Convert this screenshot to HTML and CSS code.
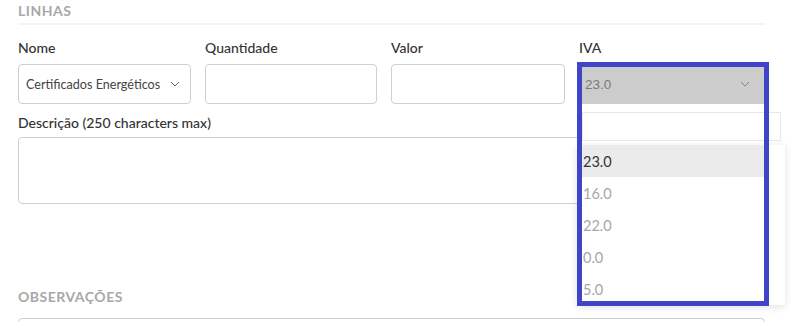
FILE: index.html
```html
<!DOCTYPE html>
<html lang="pt">
<head>
<meta charset="utf-8">
<title>Linhas</title>
<link rel="stylesheet" href="styles.css">
</head>
<body>
<div class="page">
  <h3 class="section-title">Linhas</h3>
  <div class="fields">
    <div class="field">
      <label class="label">Nome</label>
      <div class="select">
        <span class="select-text">Certificados Energéticos</span>
        <svg class="chev" width="10" height="6" viewBox="0 0 10 6"><path d="M1 1 L5 5 L9 1" fill="none" stroke="#666" stroke-width="1"/></svg>
      </div>
    </div>
    <div class="field">
      <label class="label">Quantidade</label>
      <div class="input"></div>
    </div>
    <div class="field">
      <label class="label">Valor</label>
      <div class="input"></div>
    </div>
    <div class="field">
      <label class="label">IVA</label>
      <div class="iva-wrap">
        <div class="select select-disabled">
          <span class="select-text iva-text">23.0</span>
          <svg class="chev" width="10" height="6" viewBox="0 0 10 6"><path d="M1 1 L5 5 L9 1" fill="none" stroke="#888" stroke-width="1"/></svg>
        </div>
        <div class="dropdown">
          <div class="search"></div>
          <ul class="options">
            <li class="opt active">23.0</li>
            <li class="opt">16.0</li>
            <li class="opt">22.0</li>
            <li class="opt">0.0</li>
            <li class="opt">5.0</li>
          </ul>
        </div>
        <div class="highlight"></div>
      </div>
    </div>
  </div>
  <label class="label desc-label">Descrição (250 characters max)</label>
  <div class="textarea"></div>
  <h3 class="section-title obs-title">Observações</h3>
  <div class="obs-box"></div>
</div>
</body>
</html>
```

FILE: styles.css
```css
html, body {
  margin: 0;
  padding: 0;
  background: #fff;
}
body {
  font-family: "Lato", "Liberation Sans", sans-serif;
  color: #333;
  overflow: hidden;
}
.page {
  padding-left: 18px;
  width: 747px;
}
.section-title {
  margin: 0;
  font-size: 14px;
  font-weight: 700;
  text-transform: uppercase;
  letter-spacing: 0.5px;
  color: #a8a8a8;
  line-height: 20px;
  padding-top: 1px;
  padding-bottom: 2px;
  border-bottom: 2px solid #f4f4f4;
}
.fields {
  display: grid;
  grid-template-columns: 173px 172px 174px 186px;
  column-gap: 14px;
  margin-top: 13px;
}
.field {
  display: flex;
  flex-direction: column;
}
.label {
  display: block;
  font-size: 14px;
  line-height: 20px;
  font-weight: 500;
  color: #333;
  margin-bottom: 6px;
}
.input, .select {
  height: 40px;
  box-sizing: border-box;
  border: 1px solid #cfcfcf;
  border-radius: 4px;
  background: #fff;
}
.select {
  display: flex;
  align-items: center;
  justify-content: space-between;
  padding: 0 10px 0 7px;
}
.select-text {
  font-size: 12.6px;
  color: #444;
  white-space: nowrap;
}
.chev {
  display: block;
  flex: none;
}
.iva-wrap {
  position: relative;
}
.select-disabled {
  background: #cccccc;
  border-color: #cccccc;
  border-radius: 0;
  padding: 0 14px 0 5px;
}
.iva-text {
  font-family: "Liberation Sans", Arial, sans-serif;
  color: #7a7a7a;
  font-size: 13.5px;
}
.dropdown {
  position: absolute;
  left: -2px;
  top: 40px;
  width: 208px;
}
.search {
  margin: 8px 0 0 5px;
  width: 199px;
  height: 29px;
  box-sizing: border-box;
  border: 1px solid #e8e8e8;
  background: #fff;
}
.options {
  list-style: none;
  margin: 4px 0 0 0;
  padding: 0 16px 0 0;
  background: #fff;
  box-shadow: 0 2px 8px rgba(0, 0, 0, 0.12);
}
.opt {
  height: 32px;
  line-height: 33px;
  padding-left: 6px;
  font-size: 14.5px;
  color: #a6a6a6;
}
.opt.active {
  background: #ebebeb;
  color: #333;
}
.highlight {
  position: absolute;
  left: -2px;
  top: -2px;
  width: 192px;
  height: 244px;
  box-sizing: border-box;
  border: 5px solid #4044c8;
  pointer-events: none;
}
.desc-label {
  margin-top: 9px;
  margin-bottom: 4px;
}
.textarea {
  height: 67px;
  box-sizing: border-box;
  border: 1px solid #cfcfcf;
  border-radius: 4px;
}
.obs-title {
  margin-top: 82px;
  border-bottom: none;
}
.obs-box {
  margin-top: 9px;
  height: 20px;
  border: 1px solid #cfcfcf;
  border-radius: 4px;
}
```
